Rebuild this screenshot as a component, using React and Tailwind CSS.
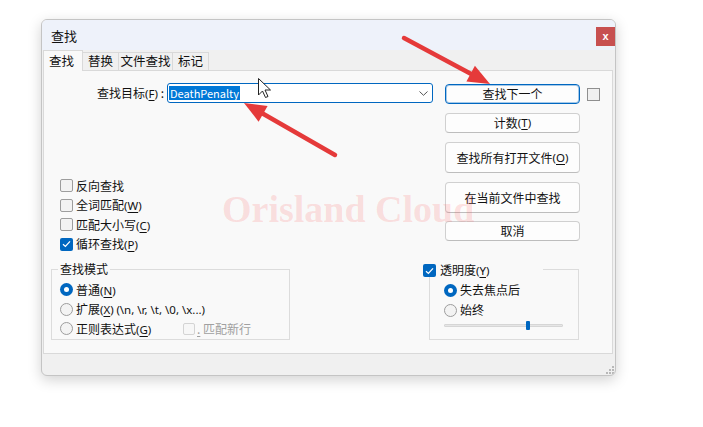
import React from "react"

const Mn = ({ c }) => (
  <span className="font-['Noto_Sans',sans-serif] text-[11.5px]">
    (<span className="underline underline-offset-[2px]">{c}</span>)
  </span>
)

const Box = ({ checked, disabled }) =>
  checked ? (
    <span className="flex h-[13px] w-[13px] shrink-0 items-center justify-center rounded-[2px] bg-[#0067c0]">
      <svg width="9" height="8" viewBox="0 0 9 8">
        <path d="M1 4.2 L3.4 6.4 L8 1.4" fill="none" stroke="#fff" strokeWidth="1.3" />
      </svg>
    </span>
  ) : (
    <span
      className={
        disabled
          ? "h-[12px] w-[12px] shrink-0 rounded-[2px] border border-[#d4d4d4] bg-[#f7f7f7]"
          : "h-[13px] w-[13px] shrink-0 rounded-[2px] border border-[#9d9d9d] bg-[#f3f3f3]"
      }
    />
  )

const Radio = ({ on }) =>
  on ? (
    <span className="flex h-[13px] w-[13px] shrink-0 items-center justify-center rounded-full bg-[#0067c0]">
      <span className="h-[5px] w-[5px] rounded-full bg-white" />
    </span>
  ) : (
    <span className="h-[13px] w-[13px] shrink-0 rounded-full border border-[#9d9d9d] bg-[#f3f3f3]" />
  )

const CheckRow = ({ checked, children }) => (
  <div className="flex h-[19.5px] items-center gap-[3px]">
    <Box checked={checked} />
    <span>{children}</span>
  </div>
)

const Btn = ({ h, focus, className = "", children }) => (
  <div
    className={
      "flex w-[135px] items-center justify-center rounded-[4px] border bg-[#fdfdfd] " +
      (focus
        ? "border-[#0067c0] shadow-[inset_0_0_0_1px_rgba(0,103,192,0.35)] "
        : "border-[#d0d0d0] border-b-[#bdbdbd] ") +
      h +
      " " +
      className
    }
  >
    {children}
  </div>
)

export default function App() {
  return (
    <div className="relative h-[427px] w-[703px] overflow-hidden bg-white font-['Noto_Sans_CJK_SC',sans-serif] text-[12px] leading-none text-[#111]">
      {/* dialog window */}
      <div className="ml-[41px] mt-[19px] flex h-[357px] w-[575px] flex-col overflow-hidden rounded-[6px] border border-[#c4c4c4] bg-[#f0f0f0] shadow-[0_4px_14px_rgba(0,0,0,0.18)]">
        {/* title bar */}
        <div className="flex h-[30px] shrink-0 items-center justify-between bg-[#eef2fa] pl-[9px]">
          <span className="text-[13px]">查找</span>
          <div className="mt-[7px] flex h-[19px] w-[19px] self-start items-center justify-center bg-[#c75050] font-['Liberation_Sans',sans-serif] text-[11px] font-bold text-white">
            x
          </div>
        </div>

        {/* tabs */}
        <div className="flex h-[20px] shrink-0 items-end pl-[1px] text-[12.5px]">
          <div className="relative z-10 -mb-[1px] flex h-[21px] w-[40px] items-center border-x border-t border-[#d9d9d9] bg-[#f9f9f9] pl-[5px]">
            查找
          </div>
          <div className="flex h-[18px] w-[36px] items-center justify-center border-r border-t border-[#d9d9d9] bg-[#f0f0f0]">
            替换
          </div>
          <div className="flex h-[18px] w-[54px] items-center justify-center border-r border-t border-[#d9d9d9] bg-[#f0f0f0]">
            文件查找
          </div>
          <div className="flex h-[18px] w-[36px] items-center justify-center border-r border-t border-[#d9d9d9] bg-[#f0f0f0]">
            标记
          </div>
        </div>

        {/* tab panel */}
        <div className="ml-[1px] mr-[2px] flex h-[284px] shrink-0 flex-col border border-[#d9d9d9] bg-[#f9f9f9]">
          <div className="flex h-[186px]">
            {/* left side */}
            <div className="flex flex-col pt-[12px]">
              <div className="flex h-[20px] items-center">
                <div className="w-[121px] pr-[1px] text-right">
                  查找目标<Mn c="F" /> :
                </div>
                <div className="ml-[2px] flex h-[20px] w-[266px] items-center justify-between rounded-[3px] border border-[#0067c0] bg-white pl-[1px] pr-[4px]">
                  <span className="flex h-[14px] items-center bg-[#0078d7] px-[1px] font-['Noto_Sans_CJK_SC',sans-serif] text-[11px] text-white">
                    DeathPenalty
                  </span>
                  <svg width="9" height="5" viewBox="0 0 9 5">
                    <path d="M0.5 0.5 L4.5 4.3 L8.5 0.5" fill="none" stroke="#555" strokeWidth="1" />
                  </svg>
                </div>
              </div>
              <div className="ml-[16px] mt-[73px] flex flex-col">
                <CheckRow>反向查找</CheckRow>
                <CheckRow>
                  全词匹配<Mn c="W" />
                </CheckRow>
                <CheckRow>
                  匹配大小写<Mn c="C" />
                </CheckRow>
                <CheckRow checked>
                  循环查找<Mn c="P" />
                </CheckRow>
              </div>
            </div>

            {/* buttons */}
            <div className="ml-[12px] flex flex-col pt-[13px]">
              <Btn h="h-[20px]" focus>
                查找下一个
              </Btn>
              <Btn h="h-[20px]" className="mt-[9px]">
                计数<Mn c="T" />
              </Btn>
              <Btn h="h-[31px]" className="mt-[9px]">
                查找所有打开文件<Mn c="O" />
              </Btn>
              <Btn h="h-[31px]" className="mt-[9px]">
                在当前文件中查找
              </Btn>
              <Btn h="h-[20px]" className="mt-[8px]">
                取消
              </Btn>
            </div>

            <div className="ml-[7px] pt-[17px]">
              <span className="block h-[13px] w-[13px] border border-[#8f8f8f] bg-[#f0f0f0]" />
            </div>
          </div>

          {/* group boxes */}
          <div className="mt-[12px] flex">
            <div className="relative ml-[7px] h-[71px] w-[239px] border border-[#dcdcdc] pl-[8px] pt-[10px]">
              <span className="absolute -top-[7px] left-[6px] bg-[#f9f9f9] px-[2px]">查找模式</span>
              <div className="flex h-[19.5px] items-center gap-[3px]">
                <Radio on />
                <span>
                  普通<Mn c="N" />
                </span>
              </div>
              <div className="flex h-[19.5px] items-center gap-[3px]">
                <Radio />
                <span>
                  扩展<Mn c="X" />{" "}
                  <span className="font-['Noto_Sans',sans-serif] text-[11.5px]">(\n, \r, \t, \0, \x...)</span>
                </span>
              </div>
              <div className="flex h-[19.5px] items-center">
                <div className="flex w-[123px] items-center gap-[3px]">
                  <Radio />
                  <span>
                    正则表达式<Mn c="G" />
                  </span>
                </div>
                <Box disabled />
                <span className="ml-[2px] text-[#a0a0a0]">
                  <span className="underline underline-offset-[2px]">.</span> 匹配新行
                </span>
              </div>
            </div>

            <div className="relative ml-[139px] h-[71px] w-[150px] border border-[#dcdcdc] pl-[14px] pt-[10px]">
              <div className="absolute -left-[7px] -top-[6px] flex h-[13px] w-[120px] items-center gap-[4px] bg-[#f9f9f9]">
                <Box checked />
                <span>
                  透明度<Mn c="Y" />
                </span>
              </div>
              <div className="flex h-[20px] items-center gap-[3px]">
                <Radio on />
                <span>失去焦点后</span>
              </div>
              <div className="flex h-[20px] items-center gap-[3px]">
                <Radio />
                <span>始终</span>
              </div>
              <div className="relative mt-[1px] flex h-[9px] w-[119px] items-center">
                <div className="h-[3px] w-full rounded-[1px] border border-[#d6d6d6] bg-[#e6e6e6]" />
                <div className="absolute left-[82px] top-0 h-[9px] w-[4px] rounded-[1px] bg-[#0067c0]" />
              </div>
            </div>
          </div>
        </div>

        {/* bottom strip with grip */}
        <div className="flex flex-1 items-end justify-end pb-[1px] pr-[1px]">
          <svg width="9" height="9" viewBox="0 0 9 9">
            <rect x="7" y="1" width="2" height="2" fill="#b8b8b8" />
            <rect x="4" y="4" width="2" height="2" fill="#b8b8b8" />
            <rect x="7" y="4" width="2" height="2" fill="#b8b8b8" />
            <rect x="1" y="7" width="2" height="2" fill="#b8b8b8" />
            <rect x="4" y="7" width="2" height="2" fill="#b8b8b8" />
            <rect x="7" y="7" width="2" height="2" fill="#b8b8b8" />
          </svg>
        </div>
      </div>

      {/* watermark */}
      <div className="pointer-events-none absolute left-[222px] top-[190px] font-['Liberation_Serif',serif] text-[38px] font-bold leading-none text-[rgba(255,80,80,0.17)]">
        Orisland Cloud
      </div>

      {/* annotation arrows */}
      <svg className="pointer-events-none absolute left-0 top-0" width="703" height="427" viewBox="0 0 703 427">
        <line x1="404" y1="38" x2="474" y2="75.5" stroke="#e53a3a" strokeWidth="4.5" strokeLinecap="round" />
        <polygon points="490,84 466.4,81.5 474.9,65.7" fill="#e53a3a" />
        <line x1="335" y1="155" x2="260" y2="112" stroke="#e53a3a" strokeWidth="4.5" strokeLinecap="round" />
        <polygon points="244,103 267.6,106.1 258.6,121.7" fill="#e53a3a" />
      </svg>

      {/* mouse cursor */}
      <svg className="pointer-events-none absolute left-[258px] top-[78px]" width="14" height="21" viewBox="0 0 14 21">
        <path d="M0.5 0.5 L0.5 17 L4.5 13 L7.5 19.5 L10 18.5 L7 12 L12.5 12 Z" fill="#fff" stroke="#222" strokeWidth="1" strokeLinejoin="round" />
      </svg>
    </div>
  )
}
